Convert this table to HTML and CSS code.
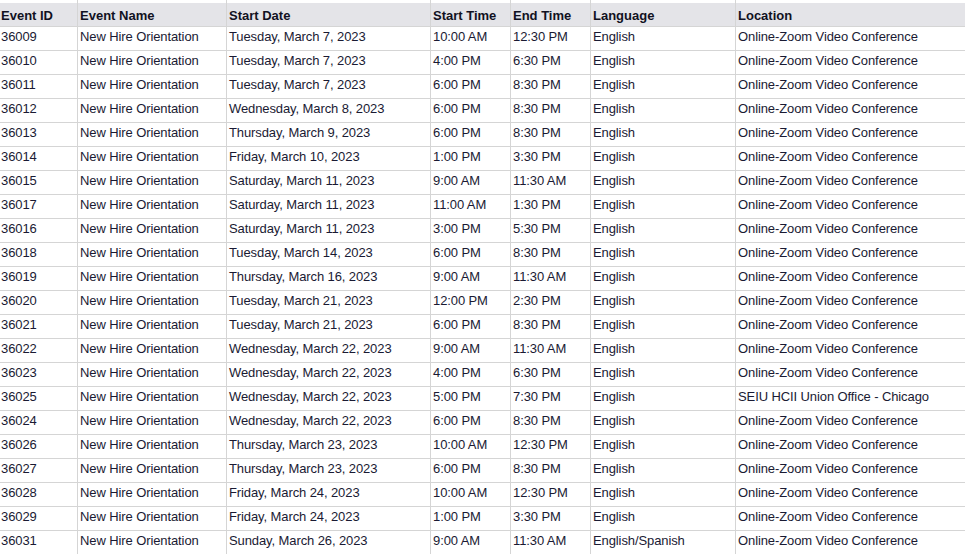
FILE: index.html
```html
<!DOCTYPE html>
<html>
<head>
<meta charset="utf-8">
<link rel="stylesheet" href="styles.css">
</head>
<body>
<div class="sheet">
  <div class="cell strip"></div><div class="cell strip"></div><div class="cell strip"></div><div class="cell strip"></div><div class="cell strip"></div><div class="cell strip"></div><div class="cell strip"></div>

  <div class="cell head first">Event ID</div><div class="cell head">Event Name</div><div class="cell head">Start Date</div><div class="cell head">Start Time</div><div class="cell head">End Time</div><div class="cell head">Language</div><div class="cell head">Location</div>

  <div class="cell first">36009</div><div class="cell">New Hire Orientation</div><div class="cell">Tuesday, March 7, 2023</div><div class="cell">10:00 AM</div><div class="cell">12:30 PM</div><div class="cell">English</div><div class="cell">Online-Zoom Video Conference</div>
  <div class="cell first">36010</div><div class="cell">New Hire Orientation</div><div class="cell">Tuesday, March 7, 2023</div><div class="cell">4:00 PM</div><div class="cell">6:30 PM</div><div class="cell">English</div><div class="cell">Online-Zoom Video Conference</div>
  <div class="cell first">36011</div><div class="cell">New Hire Orientation</div><div class="cell">Tuesday, March 7, 2023</div><div class="cell">6:00 PM</div><div class="cell">8:30 PM</div><div class="cell">English</div><div class="cell">Online-Zoom Video Conference</div>
  <div class="cell first">36012</div><div class="cell">New Hire Orientation</div><div class="cell">Wednesday, March 8, 2023</div><div class="cell">6:00 PM</div><div class="cell">8:30 PM</div><div class="cell">English</div><div class="cell">Online-Zoom Video Conference</div>
  <div class="cell first">36013</div><div class="cell">New Hire Orientation</div><div class="cell">Thursday, March 9, 2023</div><div class="cell">6:00 PM</div><div class="cell">8:30 PM</div><div class="cell">English</div><div class="cell">Online-Zoom Video Conference</div>
  <div class="cell first">36014</div><div class="cell">New Hire Orientation</div><div class="cell">Friday, March 10, 2023</div><div class="cell">1:00 PM</div><div class="cell">3:30 PM</div><div class="cell">English</div><div class="cell">Online-Zoom Video Conference</div>
  <div class="cell first">36015</div><div class="cell">New Hire Orientation</div><div class="cell">Saturday, March 11, 2023</div><div class="cell">9:00 AM</div><div class="cell">11:30 AM</div><div class="cell">English</div><div class="cell">Online-Zoom Video Conference</div>
  <div class="cell first">36017</div><div class="cell">New Hire Orientation</div><div class="cell">Saturday, March 11, 2023</div><div class="cell">11:00 AM</div><div class="cell">1:30 PM</div><div class="cell">English</div><div class="cell">Online-Zoom Video Conference</div>
  <div class="cell first">36016</div><div class="cell">New Hire Orientation</div><div class="cell">Saturday, March 11, 2023</div><div class="cell">3:00 PM</div><div class="cell">5:30 PM</div><div class="cell">English</div><div class="cell">Online-Zoom Video Conference</div>
  <div class="cell first">36018</div><div class="cell">New Hire Orientation</div><div class="cell">Tuesday, March 14, 2023</div><div class="cell">6:00 PM</div><div class="cell">8:30 PM</div><div class="cell">English</div><div class="cell">Online-Zoom Video Conference</div>
  <div class="cell first">36019</div><div class="cell">New Hire Orientation</div><div class="cell">Thursday, March 16, 2023</div><div class="cell">9:00 AM</div><div class="cell">11:30 AM</div><div class="cell">English</div><div class="cell">Online-Zoom Video Conference</div>
  <div class="cell first">36020</div><div class="cell">New Hire Orientation</div><div class="cell">Tuesday, March 21, 2023</div><div class="cell">12:00 PM</div><div class="cell">2:30 PM</div><div class="cell">English</div><div class="cell">Online-Zoom Video Conference</div>
  <div class="cell first">36021</div><div class="cell">New Hire Orientation</div><div class="cell">Tuesday, March 21, 2023</div><div class="cell">6:00 PM</div><div class="cell">8:30 PM</div><div class="cell">English</div><div class="cell">Online-Zoom Video Conference</div>
  <div class="cell first">36022</div><div class="cell">New Hire Orientation</div><div class="cell">Wednesday, March 22, 2023</div><div class="cell">9:00 AM</div><div class="cell">11:30 AM</div><div class="cell">English</div><div class="cell">Online-Zoom Video Conference</div>
  <div class="cell first">36023</div><div class="cell">New Hire Orientation</div><div class="cell">Wednesday, March 22, 2023</div><div class="cell">4:00 PM</div><div class="cell">6:30 PM</div><div class="cell">English</div><div class="cell">Online-Zoom Video Conference</div>
  <div class="cell first">36025</div><div class="cell">New Hire Orientation</div><div class="cell">Wednesday, March 22, 2023</div><div class="cell">5:00 PM</div><div class="cell">7:30 PM</div><div class="cell">English</div><div class="cell">SEIU HCII Union Office - Chicago</div>
  <div class="cell first">36024</div><div class="cell">New Hire Orientation</div><div class="cell">Wednesday, March 22, 2023</div><div class="cell">6:00 PM</div><div class="cell">8:30 PM</div><div class="cell">English</div><div class="cell">Online-Zoom Video Conference</div>
  <div class="cell first">36026</div><div class="cell">New Hire Orientation</div><div class="cell">Thursday, March 23, 2023</div><div class="cell">10:00 AM</div><div class="cell">12:30 PM</div><div class="cell">English</div><div class="cell">Online-Zoom Video Conference</div>
  <div class="cell first">36027</div><div class="cell">New Hire Orientation</div><div class="cell">Thursday, March 23, 2023</div><div class="cell">6:00 PM</div><div class="cell">8:30 PM</div><div class="cell">English</div><div class="cell">Online-Zoom Video Conference</div>
  <div class="cell first">36028</div><div class="cell">New Hire Orientation</div><div class="cell">Friday, March 24, 2023</div><div class="cell">10:00 AM</div><div class="cell">12:30 PM</div><div class="cell">English</div><div class="cell">Online-Zoom Video Conference</div>
  <div class="cell first">36029</div><div class="cell">New Hire Orientation</div><div class="cell">Friday, March 24, 2023</div><div class="cell">1:00 PM</div><div class="cell">3:30 PM</div><div class="cell">English</div><div class="cell">Online-Zoom Video Conference</div>
  <div class="cell first">36031</div><div class="cell">New Hire Orientation</div><div class="cell">Sunday, March 26, 2023</div><div class="cell">9:00 AM</div><div class="cell">11:30 AM</div><div class="cell">English/Spanish</div><div class="cell">Online-Zoom Video Conference</div>
</div>
</body>
</html>
```

FILE: styles.css
```css
html, body {
  margin: 0;
  padding: 0;
  background: #ffffff;
  overflow: hidden;
}

.sheet {
  display: grid;
  grid-template-columns: 78px 149px 204px 80px 80px 145px 1fr;
  grid-template-rows: 3px 24px;
  grid-auto-rows: 24px;
  width: 965px;
  font-family: "Liberation Sans", Arial, sans-serif;
  font-size: 13px;
  line-height: 16px;
  color: #1a1a33;
}

.cell {
  box-sizing: border-box;
  border-right: 1px solid #d5d5d5;
  border-bottom: 1px solid #d5d5d5;
  padding: 2px 2px 0;
  white-space: nowrap;
  overflow: hidden;
  letter-spacing: -0.1px;
}

.cell:nth-child(7n) {
  border-right: none;
}

.first {
  padding-left: 1px;
}

.strip {
  border-bottom: none;
  padding: 0;
}

.head {
  background: #e4e4e8;
  font-weight: bold;
  padding-top: 5px;
  color: #111122;
  letter-spacing: 0;
}
```
